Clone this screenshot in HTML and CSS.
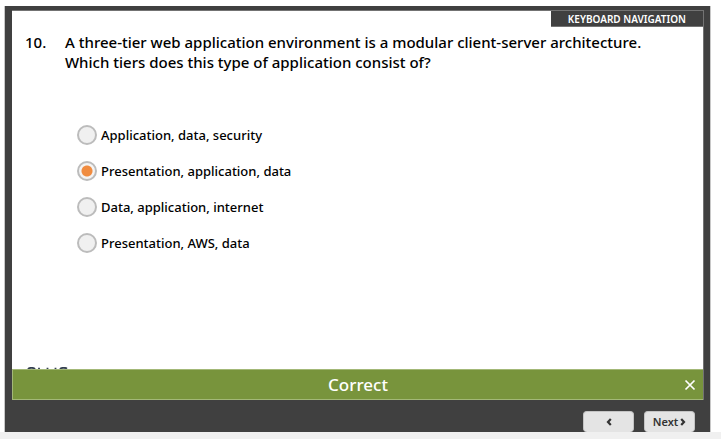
FILE: index.html
```html
<!DOCTYPE html>
<html lang="en">
<head>
<meta charset="utf-8">
<title>Knowledge check</title>
<link rel="stylesheet" href="styles.css">
</head>
<body>
<main class="player">
  <section class="slide">
    <button class="keyboard-nav" type="button">KEYBOARD NAVIGATION</button>
    <form class="quiz">
      <div class="question" id="question">
        <span class="number">10.</span>
        <p class="prompt">A three-tier web application environment is a modular client-server architecture.<br>Which tiers does this type of application consist of?</p>
      </div>
      <div class="options" role="radiogroup" aria-labelledby="question">
        <label class="option"><input type="radio" name="tiers">Application, data, security</label>
        <label class="option"><input type="radio" name="tiers" checked>Presentation, application, data</label>
        <label class="option"><input type="radio" name="tiers">Data, application, internet</label>
        <label class="option"><input type="radio" name="tiers">Presentation, AWS, data</label>
      </div>
    </form>
    <svg class="logo" viewBox="0 0 42 2" aria-hidden="true">
      <path d="M2 2Q3 .8 5.500 .8T9 2M13 .8V2M21.500 .8V2M29.500 .8V2M34 2Q35 .8 37.500 .8T41 1.600" fill="none" stroke="#344050" stroke-width="1.800"/>
    </svg>
    <div class="feedback" role="status">
      <span class="result">Correct</span>
      <button class="close" type="button" aria-label="Close">
        <svg viewBox="0 0 12 12"><path d="M1.500 1.500L10.500 10.500M10.500 1.500L1.500 10.500" fill="none" stroke="#fff" stroke-width="1.700"/></svg>
      </button>
    </div>
  </section>
  <nav class="controls">
    <button class="step" type="button" aria-label="Previous"><svg viewBox="0 0 6 8"><path d="M4.800 1L2 4L4.800 7" fill="none" stroke="#333" stroke-width="2.200"/></svg></button>
    <button class="step" type="button">Next<svg viewBox="0 0 6 8"><path d="M1.200 1L4 4L1.200 7" fill="none" stroke="#333" stroke-width="2.200"/></svg></button>
  </nav>
</main>
</body>
</html>
```
FILE: styles.css
```css
* {
  box-sizing: border-box;
}

body {
  margin: 0;
  height: 100vh;
  display: flex;
  flex-direction: column;
  padding-top: 6px;
  border-bottom: 7px solid #f0f0f0;
  background: #fff;
  color: #000;
  font-family: "Noto Sans", "Open Sans", sans-serif;
}

button {
  margin: 0;
  font-family: inherit;
  cursor: pointer;
}

.player {
  flex: 1;
  min-height: 0;
  display: flex;
  flex-direction: column;
  margin: 0 10px 0 4px;
  padding: 4px 6px 0 7px;
  border: solid #c8c8c8;
  border-width: 0 1px;
  background: #404040;
  overflow: hidden;
}

.slide {
  flex: 1;
  display: flex;
  flex-direction: column;
  border: solid #737373;
  border-width: 1px 1px 0 0;
  background: #fff;
}

.keyboard-nav {
  align-self: flex-end;
  height: 16px;
  padding: 0 17px;
  border: 0;
  border-bottom: 1px solid #737373;
  background: #404040;
  color: #fff;
  font-size: 10px;
  font-weight: 600;
  line-height: 16px;
}

.quiz {
  flex: 1;
  padding: 5px 13px 0;
  font-weight: 500;
}

.question {
  display: flex;
  font-size: 15px;
  line-height: 20px;
}

.number {
  flex: 0 0 40px;
}

.prompt {
  margin: 0;
}

.options {
  display: grid;
  gap: 16px;
  padding: 53px 52px 0;
}

.option {
  display: flex;
  align-items: center;
  gap: 4px;
  font-size: 13px;
  line-height: 20px;
}

.option input {
  appearance: none;
  width: 20px;
  height: 20px;
  margin: 0;
  border: 2px solid #bcbcbc;
  border-radius: 50%;
  background: #f0f0f0;
}

.option input:checked {
  background: radial-gradient(circle, #f08c40 5px, #f4f4f4 6px);
}

.logo {
  width: 42px;
  height: 2px;
  margin-left: 14px;
}

.feedback {
  display: grid;
  grid-template-columns: 1fr auto 1fr;
  align-items: center;
  height: 31px;
  border: solid #a3b877;
  border-width: 1px 0 1px 1px;
  background: #78943c;
}

.result {
  grid-column: 2;
  color: #fff;
  font-size: 17px;
  font-weight: 500;
  line-height: 24px;
}

.close {
  justify-self: end;
  display: flex;
  padding: 0 7px;
  border: 0;
  background: none;
}

.close svg {
  width: 12px;
  height: 12px;
}

.controls {
  display: flex;
  justify-content: flex-end;
  gap: 10px;
  height: 32px;
  padding: 11px 9px 0;
}

.step {
  display: flex;
  align-items: center;
  justify-content: center;
  gap: 2px;
  width: 51px;
  height: 21px;
  padding: 0;
  border: 1px solid #c4c4c4;
  border-bottom: 0;
  border-radius: 4px;
  background: #e4e4e4;
  color: #333;
  font-size: 11px;
  font-weight: 600;
  line-height: 18px;
}

.step svg {
  width: 6px;
  height: 8px;
}
```
